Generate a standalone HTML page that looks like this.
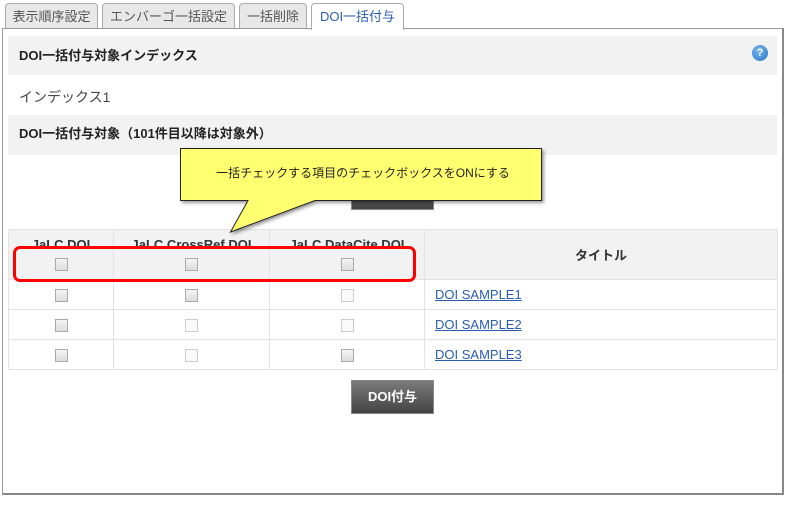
<!DOCTYPE html>
<html><head><meta charset="utf-8"><style>
*{box-sizing:border-box;margin:0;padding:0}
body{width:792px;height:509px;background:#fff;position:relative;overflow:hidden;font-family:"Liberation Sans","Noto Sans CJK JP",sans-serif;color:#333}
.abs{position:absolute}
.tab{position:absolute;top:3px;height:26px;border:1px solid #aaa;border-bottom:none;border-radius:4px 4px 0 0;background:#e8e8e8;font-size:13px;line-height:25px;text-align:center;color:#555}
.panel{left:2px;top:28px;width:782px;height:467px;border:1px solid #999;border-right:2px solid #888;border-bottom:2px solid #888}
.hd{left:8px;width:769px;background:#f2f2f2;font-weight:bold;font-size:13px;color:#222;padding-left:11px}
table{position:absolute;left:8px;top:229px;border-collapse:collapse;font-size:13px}
td,th{border:1px solid #e2e2e2;text-align:center}
th{background:#f2f2f2;color:#333}
.cb{display:inline-block;width:13px;height:13px;border:1px solid #aaa;background:linear-gradient(#f4f4f4,#ddd);vertical-align:middle}
.cb.l{border-color:#ccc;background:#fafafa}
a{color:#2a5db0;text-decoration:underline}
.btn{position:absolute;left:351px;width:83px;height:34px;background:linear-gradient(#7a7a7a,#444);border:1px solid #888;color:#fff;font-weight:bold;font-size:13px;text-align:center;line-height:32px}
</style></head><body>
<div class="tab" style="left:5px;width:93px">表示順序設定</div>
<div class="tab" style="left:102px;width:133px">エンバーゴ一括設定</div>
<div class="tab" style="left:239px;width:68px">一括削除</div>
<div class="tab" style="left:311px;width:93px;background:#fff;color:#2a5db0;height:27px;z-index:2">DOI一括付与</div>
<div class="abs panel"></div>
<div class="abs hd" style="top:36px;height:39px;line-height:39px">DOI一括付与対象インデックス</div>
<div class="abs" style="left:752px;top:45px;width:16px;height:16px;border-radius:50%;background:radial-gradient(circle at 40% 35%,#7ab8f0,#2a6fc8);color:#fff;font-size:11px;font-weight:bold;text-align:center;line-height:16px">?</div>
<div class="abs" style="left:19px;top:87px;font-size:14px;color:#444">インデックス1</div>
<div class="abs hd" style="top:115px;height:40px;line-height:38px">DOI一括付与対象（101件目以降は対象外）</div>
<div class="btn" style="top:176px">一括</div>
<table>
<tr style="height:50px"><th style="width:105px;vertical-align:top;padding-top:7px">JaLC DOI<br><span class="cb" style="margin-top:6px"></span></th><th style="width:156px;vertical-align:top;padding-top:7px">JaLC CrossRef DOI<br><span class="cb" style="margin-top:6px"></span></th><th style="width:155px;vertical-align:top;padding-top:7px">JaLC DataCite DOI<br><span class="cb" style="margin-top:6px"></span></th><th style="width:353px">タイトル</th></tr>
<tr style="height:30px"><td><span class="cb"></span></td><td><span class="cb"></span></td><td><span class="cb l"></span></td><td style="text-align:left;padding-left:10px"><a>DOI SAMPLE1</a></td></tr>
<tr style="height:30px"><td><span class="cb"></span></td><td><span class="cb l"></span></td><td><span class="cb l"></span></td><td style="text-align:left;padding-left:10px"><a>DOI SAMPLE2</a></td></tr>
<tr style="height:30px"><td><span class="cb"></span></td><td><span class="cb l"></span></td><td><span class="cb"></span></td><td style="text-align:left;padding-left:10px"><a>DOI SAMPLE3</a></td></tr>
</table>
<div class="btn" style="top:380px">DOI付与</div>
<div class="abs" style="left:13px;top:246px;width:403px;height:36px;border:3px solid #f00;border-radius:7px"></div>
<svg class="abs" style="left:175px;top:144px" width="375" height="95">
<defs><filter id="s"><feDropShadow dx="2" dy="2" stdDeviation="1.5" flood-opacity="0.4"/></filter></defs>
<path d="M5.5 4.5H366.5V56.5H140L55.5 88 73 56.5H5.5Z" fill="#ffff70" stroke="#222" stroke-width="1" filter="url(#s)"/>
<text x="188" y="33" text-anchor="middle" font-size="12" font-family="Liberation Sans,Noto Sans CJK JP,sans-serif" fill="#222">一括チェックする項目のチェックボックスをONにする</text>
</svg>
</body></html>
